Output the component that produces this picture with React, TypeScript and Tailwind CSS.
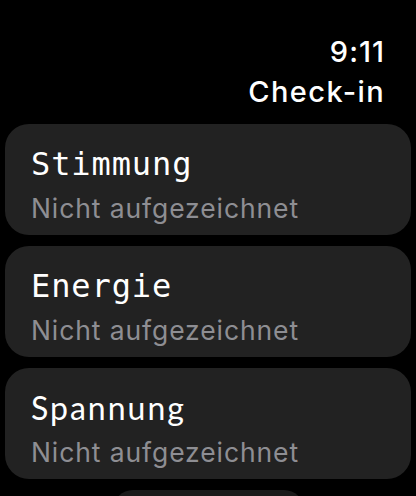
import React from "react";

const items = [
  { title: "Stimmung", font: "font-['DejaVu_Sans_Mono',monospace] tracking-[0.9px]" },
  { title: "Energie", font: "font-['DejaVu_Sans_Mono',monospace] tracking-[0.9px]" },
  { title: "Spannung", font: "font-['Lato',sans-serif] font-normal tracking-[2px]" },
];

const CheckInCard = ({ title, font }: { title: string; font: string }) => {
  return (
    <div className="h-[111px] rounded-[24px] bg-[#222222] px-[26px] pt-[20px]">
      <div className={`text-[32px] leading-[40px] text-white ${font}`}>{title}</div>
      <div className="mt-[8px] text-[26.5px] leading-[32px] text-[#8e8e93] font-['Inter',sans-serif] tracking-[0.9px]">
        Nicht aufgezeichnet
      </div>
    </div>
  );
};

export default function App() {
  return (
    <div className="w-[416px] h-[496px] overflow-hidden bg-black font-['Inter',sans-serif]">
      <div className="flex flex-col items-end pt-[32px] pr-[31px] text-white">
        <div className="text-[29px] leading-[40px] font-medium tracking-[1px]">9:11</div>
        <div className="text-[29px] leading-[40px] font-medium tracking-[1.4px]">Check-in</div>
      </div>
      <div className="mt-[12px] flex flex-col gap-[11px] px-[5px]">
        {items.map((item) => (
          <CheckInCard key={item.title} title={item.title} font={item.font} />
        ))}
        <div className="mx-auto w-[191px] h-[40px] rounded-[20px] bg-[#1a1a1a]" />
      </div>
    </div>
  );
}
